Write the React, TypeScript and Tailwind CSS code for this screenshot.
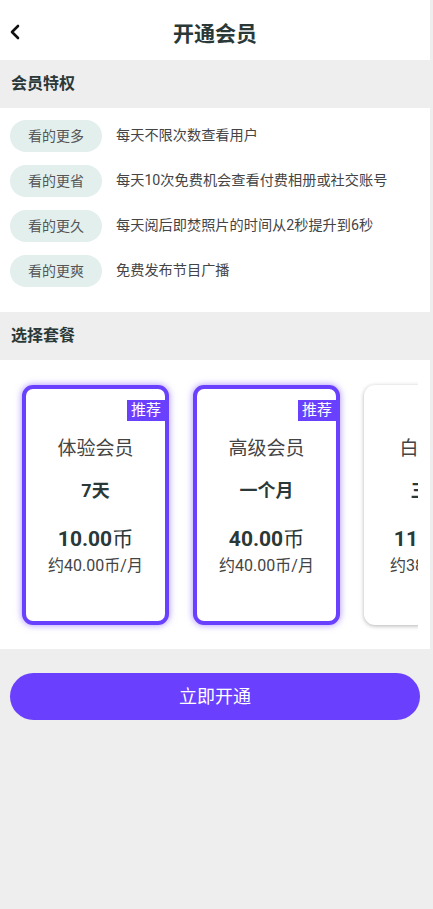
import React from "react";

const perks = [
  ["看的更多", "每天不限次数查看用户"],
  ["看的更省", "每天10次免费机会查看付费相册或社交账号"],
  ["看的更久", "每天阅后即焚照片的时间从2秒提升到6秒"],
  ["看的更爽", "免费发布节目广播"],
];

const plans = [
  { name: "体验会员", period: "7天", price: "10.00", per: "约40.00币/月", selected: true },
  { name: "高级会员", period: "一个月", price: "40.00", per: "约40.00币/月", selected: true },
  { name: "白金会员", period: "三个月", price: "115.00", per: "约38.33币/月", selected: false },
];

export default function App() {
  return (
    <div
      className="w-[433px] h-[909px] bg-[#eeeeee] flex"
      style={{ fontFamily: "Roboto, 'Noto Sans CJK SC', sans-serif" }}
    >
      <div className="w-[430px] flex flex-col">
        <div className="h-[60px] bg-white relative flex items-center justify-center">
          <svg className="absolute left-[9px] top-[24px]" width="12" height="16" viewBox="0 0 12 16">
            <path d="M9 2 L3 8 L9 14" fill="none" stroke="#111" strokeWidth="2.6" strokeLinecap="round" strokeLinejoin="round" />
          </svg>
          <span className="text-[21px] font-bold text-[#2b3838] mt-[9px]">开通会员</span>
        </div>
        <div className="h-[48px] flex items-center pl-[11px] text-[16px] font-bold text-[#2b3838]">会员特权</div>
        <div className="bg-white pt-[12px] pb-[25px] px-[10px] flex flex-col gap-[13px]">
          {perks.map(([tag, desc]) => (
            <div key={tag} className="flex items-center">
              <div className="w-[92px] h-[32px] rounded-full bg-[#e2efed] flex items-center justify-center text-[14px] text-[#555]">
                {tag}
              </div>
              <div className="ml-[14px] text-[14.2px] text-[#444]">{desc}</div>
            </div>
          ))}
        </div>
        <div className="h-[48px] flex items-center pl-[11px] text-[16px] font-bold text-[#2b3838]">选择套餐</div>
        <div className="bg-white h-[289px] pr-[12px]">
          <div className="overflow-hidden pl-[22px] pt-[25px] pb-[20px]">
            <div className="flex gap-[24px]">
              {plans.map((p) => (
                <div
                  key={p.name}
                  className={
                    p.selected
                      ? "relative shrink-0 w-[147px] h-[240px] rounded-[11px] border-[4px] border-[#6a40ff] bg-white shadow-[0_0_7px_rgba(106,64,255,0.6)] flex flex-col items-center pt-[47px]"
                      : "relative shrink-0 w-[147px] h-[240px] rounded-[11px] border-[4px] border-white bg-white shadow-[0_1px_4px_rgba(0,0,0,0.3)] flex flex-col items-center pt-[47px]"
                  }
                >
                  {p.selected && (
                    <div className="absolute right-0 top-[11px] h-[21px] px-[4px] bg-[#6a40ff] text-white text-[15px] leading-[21px]">
                      推荐
                    </div>
                  )}
                  <div className="text-[19px] leading-[26px] text-[#444]">{p.name}</div>
                  <div className="mt-[16px] text-[18px] leading-[26px] font-bold text-[#2b3838]">{p.period}</div>
                  <div className="mt-[21px] leading-[28px] text-[#2b3838] whitespace-nowrap">
                    <span className="text-[21px] font-bold">{p.price}</span>
                    <span className="text-[21px]">币</span>
                  </div>
                  <div className="text-[16px] leading-[22px] text-[#444] whitespace-nowrap">{p.per}</div>
                </div>
              ))}
            </div>
          </div>
        </div>
        <div className="px-[10px] pt-[24px]">
          <div className="h-[47px] rounded-full bg-[#6a3ffe] flex items-center justify-center text-white text-[18px]">
            立即开通
          </div>
        </div>
      </div>
    </div>
  );
}
